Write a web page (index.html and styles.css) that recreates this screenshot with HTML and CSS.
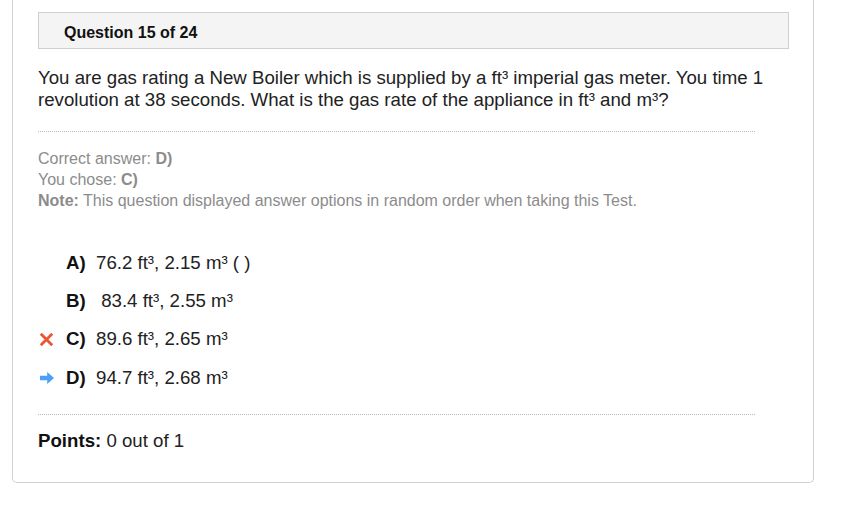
FILE: index.html
```html
<!DOCTYPE html>
<html>
<head>
<meta charset="utf-8">
<link rel="stylesheet" href="styles.css">
</head>
<body>
<div class="card">
  <div class="qhead">Question 15 of 24</div>
  <p class="qtext">You are gas rating a New Boiler which is supplied by a ft³ imperial gas meter. You time 1 revolution at 38 seconds. What is the gas rate of the appliance in ft³ and m³?</p>
  <hr class="dots">
  <div class="feedback">
    <div>Correct answer: <b>D)</b></div>
    <div>You chose: <b>C)</b></div>
    <div><b>Note:</b> This question displayed answer options in random order when taking this Test.</div>
  </div>
  <ul class="options">
    <li><span class="mark"></span><b class="letter">A)</b><span class="val">76.2 ft³, 2.15 m³ ( )</span></li>
    <li><span class="mark"></span><b class="letter">B)</b><span class="val">&nbsp;83.4 ft³, 2.55 m³</span></li>
    <li><span class="mark"><svg width="13" height="13" viewBox="0 0 13 13"><path d="M1.8 1.8 L11.2 11.2 M11.2 1.8 L1.8 11.2" stroke="#eb5434" stroke-width="2.8" stroke-linecap="square"/></svg></span><b class="letter">C)</b><span class="val">89.6 ft³, 2.65 m³</span></li>
    <li><span class="mark"><svg width="14" height="12" viewBox="0 0 14 12"><path d="M0 3.8 H7.2 V0 L14 6 L7.2 12 V8.2 H0 Z" fill="#4b9ff5"/></svg></span><b class="letter">D)</b><span class="val">94.7 ft³, 2.68 m³</span></li>
  </ul>
  <hr class="dots dots2">
  <div class="points"><b>Points:</b> 0 out of 1</div>
</div>
</body>
</html>
```
FILE: styles.css
```css
html, body {
  margin: 0;
  padding: 0;
  background: #fff;
}
body {
  font-family: "Liberation Sans", Arial, sans-serif;
  color: #222;
}
.card {
  box-sizing: border-box;
  width: 802px;
  height: 483px;
  margin-left: 12px;
  border: 1px solid #d0d0d0;
  border-top: 0;
  border-radius: 0 0 5px 5px;
  padding: 12px 24px 0 25px;
}
.qhead {
  box-sizing: border-box;
  height: 37px;
  background: #f4f4f4;
  border: 1px solid #cfcfcf;
  padding: 3px 0 0 25px;
  font-weight: bold;
  font-size: 16px;
  line-height: 34px;
  color: #111;
}
.qtext {
  margin: 18px 0 0 0;
  font-size: 18.67px;
  line-height: 22px;
  color: #222;
}
.dots {
  width: 717px;
  margin: 20px 0 0 0;
  border: 0;
  border-top: 1px dotted #bbb;
  height: 0;
}
.feedback {
  margin-top: 16px;
  font-size: 16px;
  line-height: 21px;
  color: #8c8c8c;
}
.feedback b {
  color: #8c8c8c;
}
.options {
  list-style: none;
  margin: 33px 0 0 0;
  padding: 0;
  font-size: 18.67px;
}
.options li {
  display: flex;
  align-items: center;
  height: 38.2px;
}
.mark {
  width: 28px;
  display: flex;
  align-items: center;
  padding-left: 2px;
  box-sizing: border-box;
}
.letter {
  width: 30px;
  color: #111;
}
.val {
  color: #222;
}
.dots2 {
  margin-top: 17px;
}
.points {
  margin-top: 15px;
  font-size: 18.67px;
  color: #222;
}
.points b {
  color: #111;
}
```
